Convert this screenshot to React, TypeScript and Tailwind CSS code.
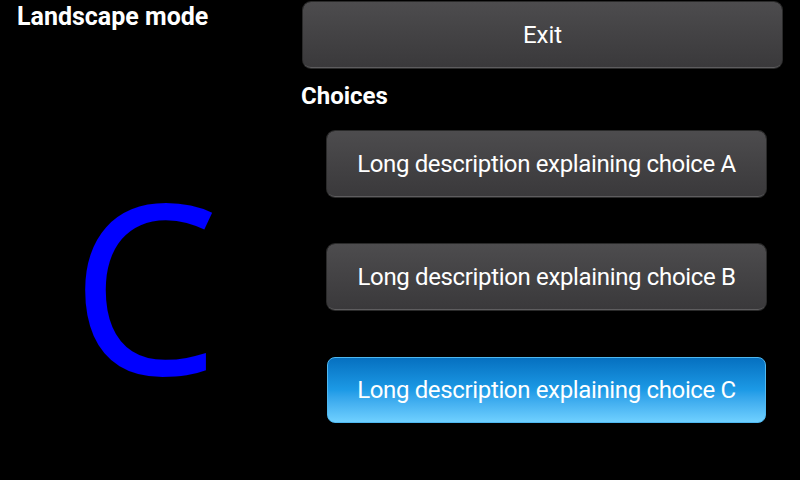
const choices = ['A', 'B', 'C'];

const GrayButton = ({ label, className }: { label: string; className: string }) => (
  <div
    className={`flex items-center justify-center rounded-lg border-b border-[#5e5d5f] bg-gradient-to-b from-[#4d4c4e] to-[#3a393b] text-white shadow-[0_0_0_1px_#2a2a2a] ${className}`}
  >
    {label}
  </div>
);

const App = () => {
  const selected = 'C';

  return (
    <div
      className="flex h-[480px] w-[800px] bg-black text-white"
      style={{ fontFamily: 'Roboto, "Open Sans", sans-serif' }}
    >
      {/* Left: title and big letter */}
      <div className="flex w-[290px] flex-col">
        <h1 className="pl-[17px] pt-[2px] text-[25px] font-bold leading-[30px]">Landscape mode</h1>
        <div className="flex flex-1 items-center justify-center pt-[56px]">
          <span
            className="text-[236px] leading-none text-[#0000ff]"
            style={{ fontFamily: '"Open Sans", sans-serif' }}
          >
            {selected}
          </span>
        </div>
      </div>

      {/* Right: exit and choices */}
      <div className="flex flex-1 flex-col pr-[18px] pl-[13px]">
        <GrayButton label="Exit" className="mt-[2px] h-[66px] text-[24px]" />
        <h2 className="-ml-[2px] mt-[13px] text-[24px] font-bold leading-[30px]">Choices</h2>
        <div className="mt-[20px] flex flex-col gap-[47px] pl-[24px] pr-[16px]">
          {choices.map((c) =>
            c === selected ? (
              <div
                key={c}
                className="flex h-[66px] items-center justify-center rounded-lg border border-[#4fb8f0] bg-gradient-to-b from-[#0670c0] via-[#1c9ae6] to-[#6fd0ff] text-[24px] tracking-[-0.35px]"
              >
                Long description explaining choice {c}
              </div>
            ) : (
              <GrayButton
                key={c}
                label={`Long description explaining choice ${c}`}
                className="h-[66px] text-[24px] tracking-[-0.35px]"
              />
            )
          )}
        </div>
      </div>
    </div>
  );
};

export default App;
